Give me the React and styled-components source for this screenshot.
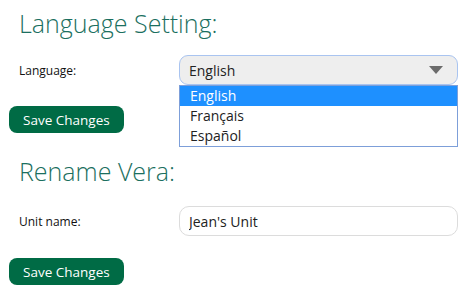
import React from "react";
import styled, { createGlobalStyle } from "styled-components";

const Global = createGlobalStyle`
  body {
    margin: 0;
    background: #fff;
    font-family: "Open Sans", "Liberation Sans", sans-serif;
  }
`;

const Page = styled.div`
  width: 475px;
  height: 297px;
  padding: 4px 17px 0 9px;
  box-sizing: border-box;
  overflow: hidden;
`;

const Section = styled.section`
  display: flex;
  flex-direction: column;
  align-items: flex-start;
  margin-bottom: ${(p) => p.gap || 0}px;
`;

const Heading = styled.h2`
  margin: 0 0 ${(p) => p.below || 0}px 10px;
  font-weight: 300;
  font-size: 25px;
  line-height: 38px;
  color: #1b6f60;
`;

const Row = styled.div`
  display: flex;
  align-items: center;
  width: 100%;
  margin-bottom: ${(p) => p.below || 0}px;
`;

const Label = styled.label`
  width: 170px;
  padding-left: 10px;
  box-sizing: border-box;
  flex: none;
  font-size: 12px;
  color: #111;
`;

const SelectWrap = styled.div`
  position: relative;
  flex: 1;
`;

const SelectBox = styled.div`
  display: flex;
  align-items: center;
  justify-content: space-between;
  height: 30px;
  box-sizing: border-box;
  padding: 0 14px 0 9px;
  background: #eeeeee;
  border: 1px solid #a9c4f0;
  border-radius: 9px;
  font-size: 14px;
  color: #222;
`;

const Caret = styled.span`
  width: 0;
  height: 0;
  border-left: 7px solid transparent;
  border-right: 7px solid transparent;
  border-top: 8px solid #6b6b6b;
`;

const Menu = styled.ul`
  position: absolute;
  left: 0;
  right: 0;
  top: 30px;
  margin: 0;
  padding: 0;
  list-style: none;
  background: #fff;
  border: 1px solid #7d9fd9;
  z-index: 2;
`;

const Option = styled.li`
  height: 20px;
  line-height: 20px;
  padding-left: 10px;
  font-size: 14px;
  color: ${(p) => (p.active ? "#fff" : "#222")};
  background: ${(p) => (p.active ? "#1e90ff" : "transparent")};
`;

const TextInput = styled.input`
  flex: 1;
  height: 30px;
  box-sizing: border-box;
  padding: 0 9px;
  border: 1px solid #dcdcdc;
  border-radius: 10px;
  font-family: inherit;
  font-size: 14px;
  color: #222;
  outline: none;
`;

const Button = styled.button`
  height: 27px;
  padding: 0 14px;
  border: none;
  border-radius: 8px;
  background: #006b45;
  color: #fff;
  font-family: inherit;
  font-size: 13.5px;
`;

const languages = ["English", "Français", "Español"];

export default function App() {
  return (
    <Page>
      <Global />
      <Section gap={19}>
        <Heading below={13}>Language Setting:</Heading>
        <Row below={21}>
          <Label>Language:</Label>
          <SelectWrap>
            <SelectBox>
              English
              <Caret />
            </SelectBox>
            <Menu>
              {languages.map((l, i) => (
                <Option key={l} active={i === 0}>
                  {l}
                </Option>
              ))}
            </Menu>
          </SelectWrap>
        </Row>
        <Button>Save Changes</Button>
      </Section>
      <Section>
        <Heading below={16}>Rename Vera:</Heading>
        <Row below={22}>
          <Label>Unit name:</Label>
          <TextInput defaultValue="Jean's Unit" />
        </Row>
        <Button>Save Changes</Button>
      </Section>
    </Page>
  );
}
